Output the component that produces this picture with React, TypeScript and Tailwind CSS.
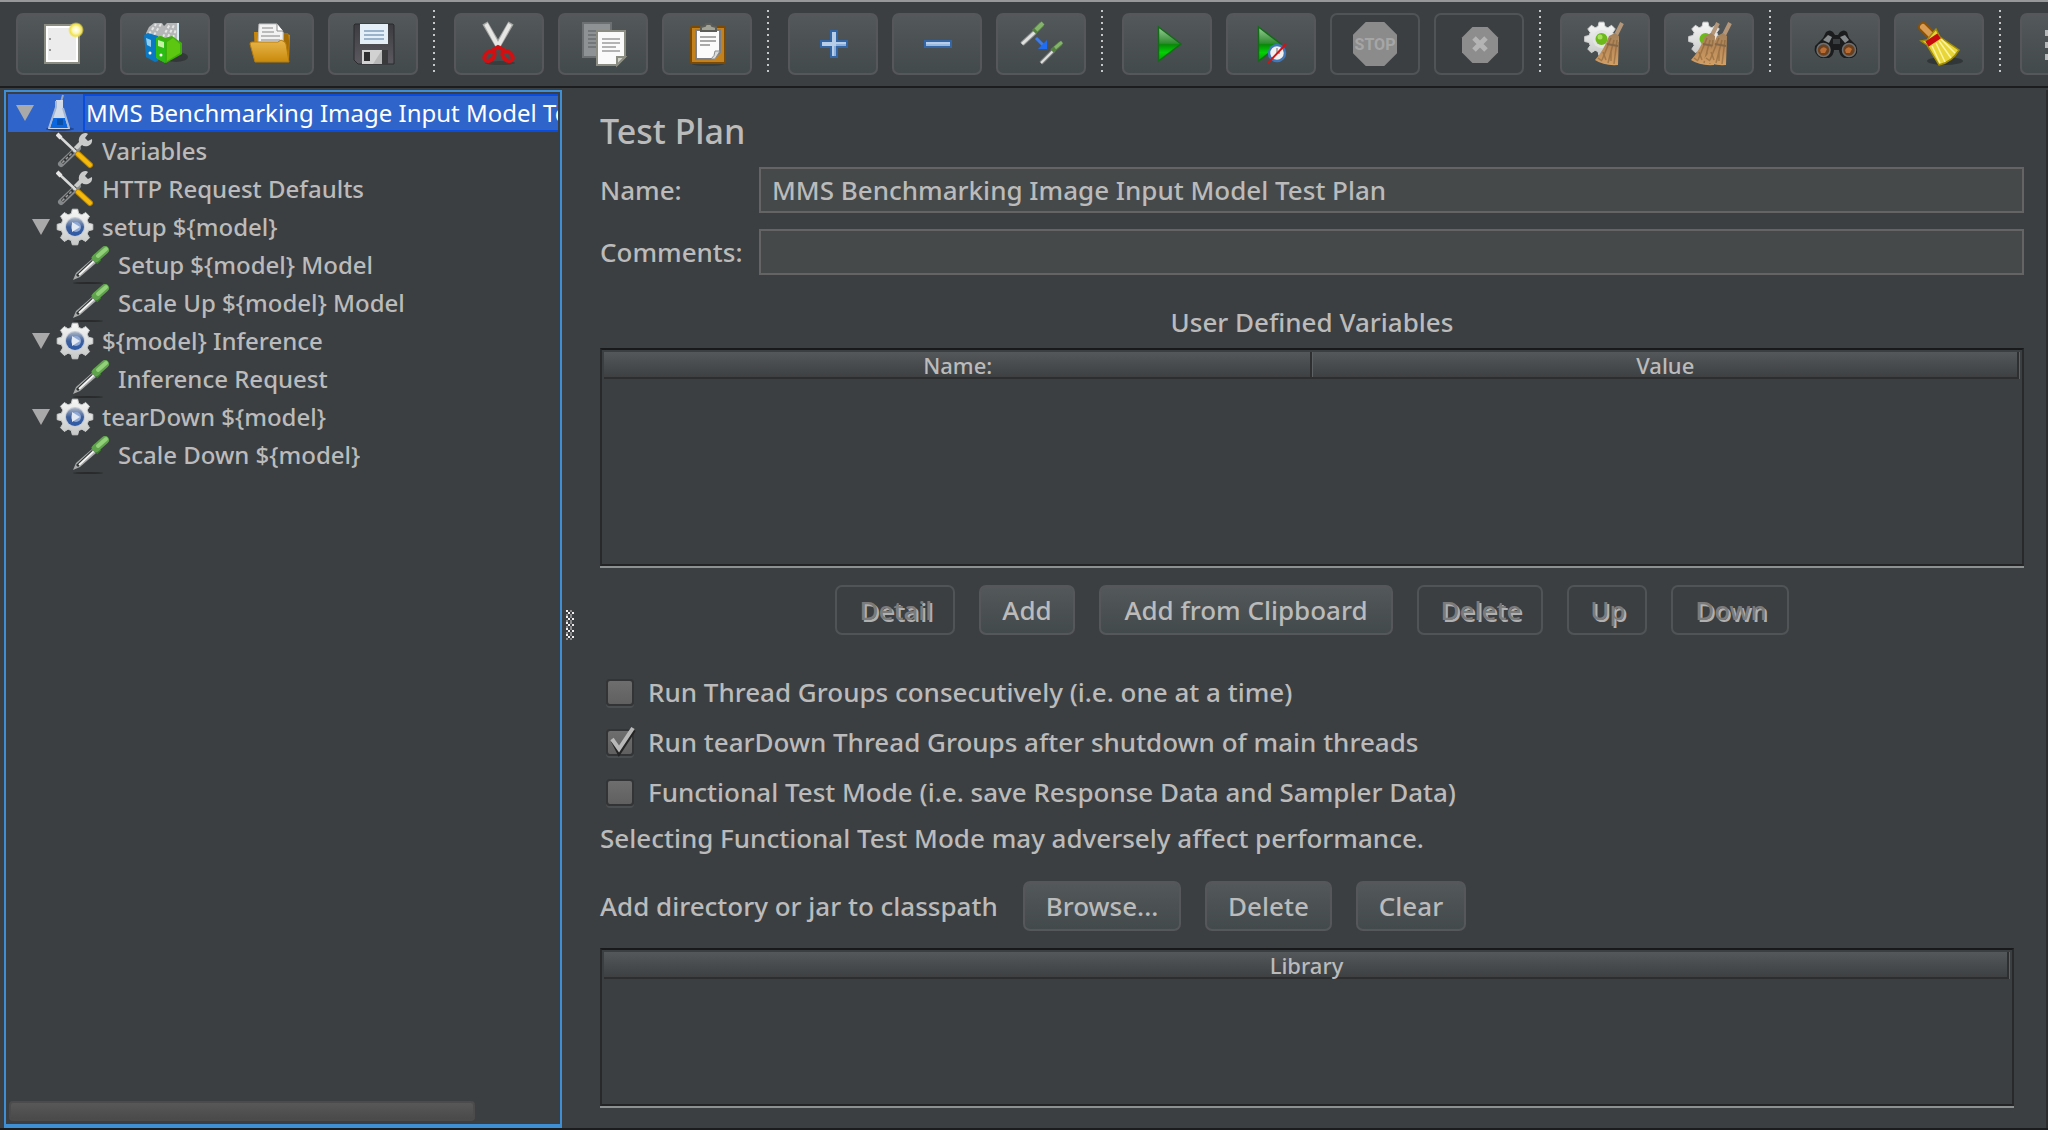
import { useState } from "react";
import type { ReactNode } from "react";

const BTN =
  "rounded-[7px] border-2 border-[#55575a] bg-linear-to-b from-[#53585a] to-[#434a4b]";
const FLAT = "rounded-[7px] border-2 border-[#515456] bg-transparent";

const gearPath = (cx: number, cy: number, r: number, inner: number) => {
  const pts: string[] = [];
  for (let i = 0; i < 8; i++) {
    const base = (i * Math.PI) / 4;
    [
      [-0.27, inner],
      [-0.15, r],
      [0.15, r],
      [0.27, inner],
    ].forEach(([o, d]) => {
      pts.push(`${(cx + Math.sin(base + o) * d).toFixed(1)},${(cy - Math.cos(base + o) * d).toFixed(1)}`);
    });
  }
  return pts.join(" ");
};

function Defs() {
  return (
    <svg width="0" height="0" className="absolute" aria-hidden="true">
      <defs>
        <linearGradient id="play" x1="0" y1="0" x2="0" y2="1">
          <stop offset="0" stopColor="#9bcf9b" />
          <stop offset="0.48" stopColor="#2e8a2e" />
          <stop offset="0.52" stopColor="#068a06" />
          <stop offset="0.75" stopColor="#04cf04" />
          <stop offset="1" stopColor="#0a9a0a" />
        </linearGradient>
        <linearGradient id="folder" x1="0" y1="0" x2="0" y2="1">
          <stop offset="0" stopColor="#e9b64c" />
          <stop offset="1" stopColor="#c98a0c" />
        </linearGradient>
        <linearGradient id="metal" x1="0" y1="0" x2="0" y2="1">
          <stop offset="0" stopColor="#f7f7f7" />
          <stop offset="1" stopColor="#c6c8c8" />
        </linearGradient>
        <linearGradient id="broom" x1="0" y1="0" x2="0" y2="1">
          <stop offset="0" stopColor="#a3825d" />
          <stop offset="0.45" stopColor="#b98a58" />
          <stop offset="1" stopColor="#d3a066" />
        </linearGradient>
        <linearGradient id="disk" x1="0" y1="0" x2="0" y2="1">
          <stop offset="0" stopColor="#3c3c40" />
          <stop offset="1" stopColor="#5c5a60" />
        </linearGradient>
        <radialGradient id="sun">
          <stop offset="0" stopColor="#ffffff" />
          <stop offset="0.45" stopColor="#fbf6b0" />
          <stop offset="0.75" stopColor="#efe04a" />
          <stop offset="1" stopColor="#efe04a" stopOpacity="0" />
        </radialGradient>
        <linearGradient id="ring" x1="0" y1="0" x2="0" y2="1">
          <stop offset="0" stopColor="#aab4c4" />
          <stop offset="0.5" stopColor="#3d5f9a" />
          <stop offset="1" stopColor="#2c5aa8" />
        </linearGradient>
      </defs>
    </svg>
  );
}

const octagon = (a: number, b: number) => {
  const c = (b - a) * 0.29;
  return `${a + c},${a} ${b - c},${a} ${b},${a + c} ${b},${b - c} ${b - c},${b} ${a + c},${b} ${a},${b - c} ${a},${a + c}`;
};

const NewIcon = (
  <>
    <rect x="6" y="3" width="34" height="38" fill="url(#metal)" stroke="#8b8c82" strokeWidth="2" />
    <rect x="8" y="5" width="30" height="34" fill="#ececec" stroke="#fff" strokeWidth="2" />
    <path d="M10 16h2v2h-2zM10 27h2v2h-2z" fill="#999" />
    <circle cx="37" cy="8" r="8" fill="url(#sun)" />
  </>
);

const TemplatesIcon = (
  <>
    <ellipse cx="33" cy="35" rx="12" ry="5" fill="#262a2b" opacity=".6" />
    <path d="M3 11 6 5l5-4h8l2 3 3-3h10v19H14L4 15z" fill="#b4b6b7" />
    <path d="m6 12 7-10M11 13l7-11M20 15l7-13M25 15l6-12M30 16l3-9" stroke="#e6e6e6" strokeWidth="2" strokeDasharray="3 2" />
    <path d="M34 1h2v18h-2z" fill="#d5ecf7" />
    <path d="m1 13 4-2 10 3v25l-3 1-9-5z" fill="#0b78c4" />
    <path d="m3 16 5 2v7l-4-2z" fill="#8fcdf2" />
    <circle cx="7" cy="31" r="1.500" fill="#fff" />
    <path d="M13 16q4-4 9 0l7-2 10 7v11L23 41l-9-4z" fill="#3fae0c" />
    <path d="m24 20 6-4 7 6v9l-13 8z" fill="#5cc611" />
    <path d="m13 16 9 3v22l-9-5z" fill="#2bbd14" />
    <path d="m15 18 6 2v6l-6-2z" fill="#c5f2a5" />
    <circle cx="18" cy="33" r="1.500" fill="#fff" />
  </>
);

const OpenIcon = (
  <>
    <path d="M7 10h6v10h22V10l8 3-1 26H8z" fill="#c8860a" />
    <path d="M12 2h18l6 8v13H11z" fill="#f2f2f2" stroke="#c4c4c4" />
    <path d="M30 2v7h6" fill="#fff" stroke="#8a8a8a" />
    <path d="M15 6h11M15 10h12M14 14h19M14 18h19" stroke="#a9a9a9" strokeWidth="1.500" />
    <path d="M37 11h4l1 8-1 20-4-12z" fill="#a36c06" />
    <path d="M3 22q0-2 2-2h26l3-2q5 2 5 4l3 18H8z" fill="url(#folder)" stroke="#b67c0b" />
  </>
);

const SaveIcon = (
  <>
    <path d="M4 2h38l1 1v39H7l-4-4V3z" fill="url(#disk)" stroke="#2b2b2e" />
    <path d="M9 2h28v20H9z" fill="#e4eef6" />
    <path d="M13 9h20M13 13h20M13 17h20" stroke="#9ab3cb" strokeWidth="2" />
    <path d="M11 28h20v14H11z" fill="#b8b8b8" />
    <path d="M11 28h20l-9 14H11z" fill="#d2d2d2" />
    <path d="M13 30h6v9h-6z" fill="#2e2e30" />
    <path d="M31 28h6v14h-6z" fill="#3a3a3d" />
  </>
);

const CutIcon = (
  <>
    <ellipse cx="23" cy="41" rx="15" ry="2" fill="#303435" opacity=".6" />
    <path d="M8 1 22 25M34 1 20 25" stroke="#a6a8a6" strokeWidth="6" />
    <path d="M9 2 22 26M33 2 20 26" stroke="#e6e6e4" strokeWidth="4" />
    <ellipse cx="12.500" cy="34" rx="4" ry="6" transform="rotate(48 12.500 34)" fill="none" stroke="#d40f12" strokeWidth="4" />
    <ellipse cx="30.500" cy="34" rx="4" ry="6" transform="rotate(-48 30.500 34)" fill="none" stroke="#d40f12" strokeWidth="4" />
    <path d="m16 28 5-3 6 3" stroke="#d40f12" strokeWidth="4" fill="none" />
  </>
);

const CopyIcon = (
  <>
    <path d="M2 1h28v34H2z" fill="#8f9294" stroke="#6d7073" strokeWidth="2" />
    <path d="M7 9h9M7 13h9M7 17h9M7 21h9M7 25h9" stroke="#73777a" strokeWidth="2" />
    <path d="M16 9h28v26l-8 8H16z" fill="#fafafa" stroke="#8b8c82" strokeWidth="2" />
    <path d="M21 17h18M21 21h18M21 25h14M21 29h18" stroke="#b3b3b3" strokeWidth="2" />
    <path d="M44 35h-8v8z" fill="#cfd0c8" stroke="#8b8c82" strokeWidth="2" />
  </>
);

const PasteIcon = (
  <>
    <ellipse cx="23" cy="42" rx="16" ry="2" fill="#303435" opacity=".6" />
    <rect x="6" y="5" width="34" height="36" rx="1" fill="#c4821f" stroke="#7b4a04" strokeWidth="2" />
    <path d="M11 8h24v22l-7 7H11z" fill="#fbfbfb" stroke="#7c7f84" strokeWidth="2" />
    <path d="M15 15h16M15 19h16M15 23h10" stroke="#a9a9a9" strokeWidth="2" />
    <path d="M35 29h-5q0 5-4 8h4z" fill="#dcdcdc" stroke="#8b8b8b" />
    <path d="M16 9V5l4-1 1-2h5l1 2 4 1v4z" fill="#a3a297" stroke="#5c5d59" strokeWidth="2" />
  </>
);

const PlusIcon = (
  <>
    <path d="M19 8h8v10h10v8H27v10h-8V26H9v-8h10z" fill="#3465a4" />
    <path d="M21 10h4v10h10v4H25v10h-4V24H11v-4h10z" fill="#b7cde8" />
    <path d="M23 24h2v10h-2zM25 22h10v2H25z" fill="#8fb0da" />
  </>
);

const MinusIcon = (
  <>
    <path d="M9 18h28v8H9z" fill="#3465a4" />
    <path d="M11 20h24v4H11z" fill="#b7cde8" />
    <path d="M11 22h24v2H11z" fill="#9bbade" />
  </>
);

const ToggleIcon = (
  <>
    <path d="M3 22 16 10" stroke="#8f9292" strokeWidth="5" />
    <path d="M3 22 16 10" stroke="#dfe1df" strokeWidth="3" />
    <path d="M15 10 23 2" stroke="#55803f" strokeWidth="6" />
    <path d="m17 8 7-7" stroke="#84b46c" strokeWidth="4" />
    <path d="M22 41 35 28" stroke="#7f8383" strokeWidth="4" />
    <path d="M22 41 35 28" stroke="#dfe1df" strokeWidth="2" />
    <path d="m33 29 9-8" stroke="#55803f" strokeWidth="5" />
    <path d="m36 26 7-6" stroke="#84b46c" strokeWidth="3" />
    <path d="m17 16 7 7" stroke="#3a7bf0" strokeWidth="3" />
    <path d="M28 18v9h-9z" fill="#1f6df5" />
  </>
);

const StartIcon = <path d="M13.500 5 36 22 13.500 39z" fill="url(#play)" stroke="#136b18" strokeWidth="1.500" />;

const StartNoPauseIcon = (
  <>
    <path d="M9.500 5 32 22 9.500 39z" fill="url(#play)" stroke="#136b18" strokeWidth="1.500" />
    <circle cx="28" cy="31" r="8" fill="#f0f0f0" stroke="#3f77ba" strokeWidth="2.500" />
    <path d="M28 31v-5M28 31h3" stroke="#999" strokeWidth="1.500" />
    <path d="M19 41 37 22" stroke="#cf1414" strokeWidth="2" />
  </>
);

const StopIcon = (
  <>
    <polygon points={octagon(0, 44)} fill="#8b8b8b" />
    <text x="22" y="28" textAnchor="middle" fill="#a6a6a6" className="font-['Roboto',sans-serif] text-[16px] font-bold">
      STOP
    </text>
  </>
);

const ShutdownIcon = (
  <>
    <polygon points={octagon(5, 41)} fill="#8d8d8d" />
    <path d="m17 16 12 12M29 16 17 28" stroke="#b4b4b4" strokeWidth="5" />
  </>
);

const broomHead = (dx: number) => (
  <g transform={`translate(${dx} 0)`}>
    <path d="m39 1-8 16" stroke="#b4977a" strokeWidth="4" />
    <path d="m26 14 6-3 4 3-1 29q-14 1-23-5 9-10 14-24z" fill="url(#broom)" />
    <path d="m28 16-9 22M31 18l-6 23M34 18l-3 24M15 36l4 3M20 30l3 8M28 30v9" stroke="#7d5932" strokeWidth="1.500" opacity=".5" />
    <path d="m24 22 11 2" stroke="#87684a" strokeWidth="2" />
  </g>
);

const ClearIcon = (
  <>
    <polygon points={gearPath(18.5, 17, 17, 13)} fill="url(#metal)" stroke="#cfd1d1" />
    <circle cx="18.500" cy="17" r="9" fill="#e2e4e4" />
    <circle cx="18.500" cy="17" r="6" fill="#6db91c" />
    <circle cx="17" cy="15" r="2.500" fill="#a8e05e" />
    {broomHead(0)}
  </>
);

const ClearAllIcon = (
  <>
    <polygon points={gearPath(18.5, 17, 17, 13)} fill="url(#metal)" stroke="#cfd1d1" />
    <circle cx="18.500" cy="17" r="6" fill="#6db91c" />
    {broomHead(-8)}
    {broomHead(4)}
  </>
);

const SearchIcon = (
  <>
    <path d="M13 10q4-3 7 0l2 3h3l2-3q4-3 7 0l2 6 7 7q4 9-4 13h-8q-5-3-5-8h-5q0 5-5 8H8Q0 32 2 24l8-8z" fill="#1b1c1d" />
    <path d="m10 18 5-5 4 2-3 6zM27 15l5-2 4 5-4 3z" fill="#85898b" />
    <path d="M20 17h7v5h-7z" fill="#3a3d3f" />
    <circle cx="10.500" cy="28" r="6.500" fill="#6b401f" stroke="#6d7072" strokeWidth="1.500" />
    <circle cx="36" cy="28" r="6.500" fill="#6b401f" stroke="#6d7072" strokeWidth="1.500" />
    <path d="M7 28q3-5 7-1l-2 4H8zM32 28q3-5 7-1l-2 4h-4z" fill="#b96d34" />
  </>
);

const ResetSearchIcon = (
  <>
    <ellipse cx="28" cy="39" rx="18" ry="4" fill="#23282a" opacity=".6" />
    <path d="M6 5 14 13" stroke="#8a5206" strokeWidth="10" strokeLinecap="round" />
    <path d="M6 5 14 13" stroke="#d99c54" strokeWidth="6" strokeLinecap="round" />
    <path d="m4 19 6-1 4-5 5-6 4 8 19 13q-7 12-20 15L10 23z" fill="#e8d53a" stroke="#a08c06" strokeWidth="1.500" />
    <path d="m15 24 8 17M19 21l9 19M22 19l12 17M24 17l14 14" stroke="#fbf3a0" strokeWidth="1.500" />
    <path d="m10 22 12-8" stroke="#c80d10" strokeWidth="6" />
  </>
);

const FunctionIcon = (
  <g fill="#b5b7b8">
    <path d="M2 8h6v6H2zM2 20h6v6H2zM2 32h6v6H2zM12 9h28v4H12zM12 21h28v4H12zM12 33h28v4H12z" />
  </g>
);

type Tool = { label: string; icon: ReactNode; disabled?: boolean };
const groups: Tool[][] = [
  [
    { label: "New", icon: NewIcon },
    { label: "Templates", icon: TemplatesIcon },
    { label: "Open", icon: OpenIcon },
    { label: "Save", icon: SaveIcon },
  ],
  [
    { label: "Cut", icon: CutIcon },
    { label: "Copy", icon: CopyIcon },
    { label: "Paste", icon: PasteIcon },
  ],
  [
    { label: "Expand all", icon: PlusIcon },
    { label: "Collapse all", icon: MinusIcon },
    { label: "Toggle", icon: ToggleIcon },
  ],
  [
    { label: "Start", icon: StartIcon },
    { label: "Start no pauses", icon: StartNoPauseIcon },
    { label: "Stop", icon: StopIcon, disabled: true },
    { label: "Shutdown", icon: ShutdownIcon, disabled: true },
  ],
  [
    { label: "Clear", icon: ClearIcon },
    { label: "Clear all", icon: ClearAllIcon },
  ],
  [
    { label: "Search", icon: SearchIcon },
    { label: "Reset search", icon: ResetSearchIcon },
  ],
  [{ label: "Function helper", icon: FunctionIcon }],
];

function Toolbar() {
  return (
    <header className="flex h-[88px] shrink-0 overflow-hidden border-t-2 border-b-2 border-t-[#96989a] border-b-[#1c1d1e] pt-[11px] pl-4">
      {groups.map((group, g) => (
        <div key={g} className="flex shrink-0">
          {g > 0 && (
            <div className="-mt-[3px] mr-[19px] ml-px h-16 w-[2px] bg-[repeating-linear-gradient(to_bottom,#c4c6c7_0_2px,transparent_2px_6px)]" />
          )}
          {group.map((tool) => (
            <button
              key={tool.label}
              type="button"
              aria-label={tool.label}
              disabled={tool.disabled}
              className={`mr-[14px] flex h-[62px] w-[90px] items-center justify-center ${tool.disabled ? FLAT : BTN}`}
            >
              <svg width="44" height="44" viewBox="0 0 44 44" fill="none" className="overflow-visible">
                {tool.icon}
              </svg>
            </button>
          ))}
        </div>
      ))}
    </header>
  );
}

const FlaskIcon = (
  <>
    <ellipse cx="20" cy="35" rx="14" ry="2" fill="#1d3a78" opacity=".7" />
    <path d="M21 8 23 1" stroke="#9aa7bd" strokeWidth="2" />
    <path d="M16 6h7v8l7 21H8l8-21z" fill="#dfe4ea" opacity=".92" />
    <path d="M13 24h12l3 10H10z" fill="#0b67e0" />
    <path d="M17 25h6v6h-6z" fill="#0a4fa8" />
    <path d="m9 34 7-21v-6M29 34l-6-20" stroke="#a5b6d2" strokeWidth="2" />
  </>
);

const ToolsIcon = (
  <>
    <path d="M22 16 5 32" stroke="#85888a" strokeWidth="6" strokeLinecap="round" />
    <path d="M21 16 6 31" stroke="#2f3233" strokeWidth="3" />
    <path d="M19 18 5 32" stroke="#9da0a1" strokeWidth="1.500" strokeDasharray="3 2" />
    <path d="M26 2q4-2 6 0l-3 4 3 3 4-2q1 5-4 7-4 1-6-1l-5 5-3-3 5-5q-1-5 3-8z" fill="#c9cbcb" />
    <path d="m2 3 19 18" stroke="#d8dada" strokeWidth="2.500" />
    <path d="m1 2 4 4" stroke="#e6e6e6" strokeWidth="4" />
    <path d="m22 22 12 11" stroke="#b98500" strokeWidth="6" strokeLinecap="round" />
    <path d="m22 22 12 11" stroke="#f5b90c" strokeWidth="4" strokeLinecap="round" />
  </>
);

const GearIcon = (
  <>
    <polygon points={gearPath(19, 19, 18, 14)} fill="url(#metal)" stroke="#c9cbcb" />
    <circle cx="19" cy="19" r="10" fill="#c3cad6" />
    <circle cx="19" cy="19" r="9" fill="url(#ring)" />
    <circle cx="20" cy="19" r="5" fill="#8fa9d6" />
    <path d="m16 14 8 5-8 5z" fill="#e3e9f3" />
  </>
);

const PipetteIcon = (
  <>
    <ellipse cx="16" cy="37" rx="15" ry="1" fill="#282a2b" />
    <path d="m1 34 3-7 16-14 4 4L8 31z" fill="#a7aaa9" />
    <path d="m5 30 16-15" stroke="#2f3233" strokeWidth="3" />
    <path d="m7 29 15-14" stroke="#f4f5f4" strokeWidth="2" />
    <path d="m22 15 4-4" stroke="#3f7a35" strokeWidth="9" />
    <path d="m24 12 9-8" stroke="#5fa44c" strokeWidth="8" strokeLinecap="round" />
    <path d="m26 10 8-7" stroke="#93d07a" strokeWidth="4" strokeLinecap="round" />
  </>
);

type Node = { label: string; icon: ReactNode; level: 0 | 1 | 2; open?: boolean };
const nodes: Node[] = [
  { label: "MMS Benchmarking Image Input Model Test Plan", icon: FlaskIcon, level: 0, open: true },
  { label: "Variables", icon: ToolsIcon, level: 1 },
  { label: "HTTP Request Defaults", icon: ToolsIcon, level: 1 },
  { label: "setup ${model}", icon: GearIcon, level: 1, open: true },
  { label: "Setup ${model} Model", icon: PipetteIcon, level: 2 },
  { label: "Scale Up ${model} Model", icon: PipetteIcon, level: 2 },
  { label: "${model} Inference", icon: GearIcon, level: 1, open: true },
  { label: "Inference Request", icon: PipetteIcon, level: 2 },
  { label: "tearDown ${model}", icon: GearIcon, level: 1, open: true },
  { label: "Scale Down ${model}", icon: PipetteIcon, level: 2 },
];
const indent = ["pl-2", "pl-6", "pl-10"];

function Tree() {
  const [selected, setSelected] = useState(0);
  return (
    <nav
      aria-label="Test plan tree"
      className="ml-1 flex w-[558px] shrink-0 flex-col border-2 border-b-4 border-[#3f8fd4] p-[2px]"
    >
      <ul role="tree" className="flex-1 overflow-hidden text-[24px] leading-[38px] text-[#bbbbbb]">
        {nodes.map((n, i) => (
          <li
            key={n.label}
            role="treeitem"
            aria-selected={i === selected}
            aria-expanded={n.open}
            onClick={() => setSelected(i)}
            className={`flex h-[38px] items-center whitespace-nowrap ${indent[n.level]} ${
              i === selected ? "bg-[#2f65ca] font-normal text-white" : ""
            }`}
          >
            <span className="flex w-6 shrink-0">
              {n.open && (
                <svg width="18" height="16" viewBox="0 0 18 16">
                  <path d="M0 0h18L9 16z" fill="#a9a9a9" />
                </svg>
              )}
            </span>
            <svg width="38" height="38" viewBox="0 0 38 38" fill="none" className="shrink-0">
              {n.icon}
            </svg>
            <span
              className={`ml-[5px] h-[38px] min-w-0 overflow-hidden border-2 border-r-0 pl-px leading-[34px] ${
                i === selected ? "flex-1 border-[#0a4cdc]" : "border-transparent"
              }`}
            >
              {n.label}
            </span>
          </li>
        ))}
      </ul>
      <div className="mb-px ml-px h-5 w-[466px] rounded-[4px] border-2 border-[#4b4b4b] bg-linear-to-b from-[#585858] to-[#4a4a4a]" />
    </nav>
  );
}

function Grip() {
  return (
    <div className="flex w-[38px] shrink-0 items-center pt-8 pl-1">
      <svg width="8" height="30" viewBox="0 0 8 30" aria-hidden="true">
        <defs>
          <pattern id="grip" width="8" height="6" patternUnits="userSpaceOnUse">
            <path d="M0 0h2v2H0zM2 2h2v2H2zM6 2h2v2H6z" fill="#f0f0f0" />
            <path d="M4 0h2v2H4zM0 4h2v2H0zM4 4h2v2H4z" fill="#8a8c8d" />
          </pattern>
        </defs>
        <rect width="8" height="30" fill="url(#grip)" />
      </svg>
    </div>
  );
}

function Button({ children, width, disabled }: { children: ReactNode; width: string; disabled?: boolean }) {
  return (
    <button
      type="button"
      disabled={disabled}
      className={`h-[50px] whitespace-nowrap text-center leading-[44px] ${width} ${
        disabled ? `pl-[2px] text-[#7b7b7b] [text-shadow:2px_2px_0_#b0b0b0] ${FLAT}` : BTN
      }`}
    >
      {children}
    </button>
  );
}

function Grid({ columns, label }: { columns: string[]; label: string }) {
  return (
    <div className="h-full border-b-2 border-[#8e9192]">
      <div className="h-full border-2 border-t-[#18191a] border-r-[#27292a] border-b-[#222425] border-l-[#27292a] pt-[2px] pr-[3px] pl-[2px]">
        <table aria-label={label} className="w-full table-fixed border-separate border-spacing-0 text-[22px] leading-6">
          <thead>
            <tr className="bg-linear-to-b from-[#54585b] to-[#3c3e40]">
              {columns.map((c) => (
                <th
                  key={c}
                  scope="col"
                  className="h-[27px] border-r-2 border-b-2 border-r-[#2d2f30] border-b-[#2c2e2f] p-0 pt-px pl-[2px] font-medium shadow-[1px_0_0_#5d6163]"
                >
                  {c}
                </th>
              ))}
            </tr>
          </thead>
        </table>
      </div>
    </div>
  );
}

function Check({ label, defaultChecked }: { label: string; defaultChecked?: boolean }) {
  return (
    <label className="flex h-[50px] items-center pl-[6px]">
      <span className="relative flex">
        <input
          type="checkbox"
          defaultChecked={defaultChecked}
          className="peer h-[27px] w-7 appearance-none rounded-[4px] border-2 border-[#323435] bg-linear-to-b from-[#6e6e6e] to-[#606060] shadow-[0_2px_0_#4b4e50]"
        />
        <svg
          width="28"
          height="27"
          viewBox="0 0 28 27"
          fill="none"
          className="pointer-events-none absolute inset-0 hidden overflow-visible peer-checked:block"
        >
          <path d="m7 12 6 12L28 1" stroke="#242424" strokeWidth="4" />
          <path d="m6 10 7 10L27-1" stroke="#b8b8b8" strokeWidth="4" />
        </svg>
      </span>
      <span className="ml-[14px]">{label}</span>
    </label>
  );
}

const INPUT =
  "h-[46px] min-w-0 flex-1 border-2 border-[#646464] bg-[#45494a] px-[11px] text-[#bbbbbb] outline-none";

export default function App() {
  return (
    <div className="flex h-screen min-h-[900px] flex-col overflow-hidden border-b-2 border-[#1b1c1d] bg-[#3c3f41] font-['Noto_Sans',sans-serif] text-[26px] font-medium text-[#bbbbbb]">
      <Defs />
      <Toolbar />
      <div className="flex min-h-0 flex-1 pt-[2px]">
        <Tree />
        <Grip />
        <main className="flex min-w-0 flex-1 flex-col border-r-2 border-[#2b2d2e] pr-[22px] pb-5">
          <h1 className="pt-[21px] text-[34px] leading-10">Test Plan</h1>
          <div className="mt-4 flex items-center">
            <label htmlFor="name" className="w-[159px]">
              Name:
            </label>
            <input id="name" className={INPUT} defaultValue="MMS Benchmarking Image Input Model Test Plan" />
          </div>
          <div className="mt-4 flex items-center">
            <label htmlFor="comments" className="w-[159px]">
              Comments:
            </label>
            <input id="comments" className={INPUT} />
          </div>
          <h2 className="mt-[29px] text-center leading-9">User Defined Variables</h2>
          <div className="mt-2 h-[220px] shrink-0">
            <Grid label="User Defined Variables" columns={["Name:", "Value"]} />
          </div>
          <div className="mt-[17px] flex justify-center gap-6">
            <Button width="w-[120px]" disabled>Detail</Button>
            <Button width="w-[96px]">Add</Button>
            <Button width="w-[294px]">Add from Clipboard</Button>
            <Button width="w-[126px]" disabled>Delete</Button>
            <Button width="w-[80px]" disabled>Up</Button>
            <Button width="w-[118px]" disabled>Down</Button>
          </div>
          <div className="mt-8">
            <Check label="Run Thread Groups consecutively (i.e. one at a time)" />
            <Check label="Run tearDown Thread Groups after shutdown of main threads" defaultChecked />
            <Check label="Functional Test Mode (i.e. save Response Data and Sampler Data)" />
          </div>
          <p className="mt-[3px] leading-9">Selecting Functional Test Mode may adversely affect performance.</p>
          <div className="mt-[25px] flex items-center gap-6">
            <span className="-mr-[7px] w-[406px] whitespace-nowrap">Add directory or jar to classpath</span>
            <Button width="w-[158px]">Browse...</Button>
            <Button width="w-[127px]">Delete</Button>
            <Button width="w-[110px]">Clear</Button>
          </div>
          <div className="mt-[17px] mr-[10px] min-h-0 flex-1">
            <Grid label="Library" columns={["Library"]} />
          </div>
        </main>
      </div>
    </div>
  );
}
